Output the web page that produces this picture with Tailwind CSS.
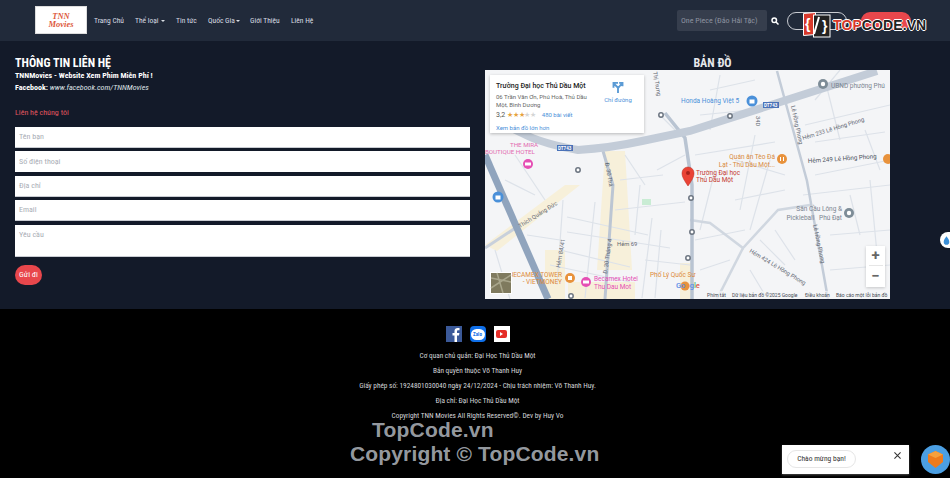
<!DOCTYPE html>
<html lang="vi">
<head>
    <meta charset="UTF-8">
    <title>Liên hệ - TNN Movies</title>
    <script src="https://cdn.jsdelivr.net/npm/@tailwindcss/browser@4"></script>
</head>
<body class="bg-[#131a29] font-['Roboto',sans-serif] [font-stretch:75%] h-[478px] w-[950px] overflow-hidden relative">

    <!-- Header -->
    <header class="h-[41px] bg-[#212a3a] flex items-center">
        <div class="ml-[35px] w-[52px] h-[28px] mt-[-2px] bg-white border border-[#ddd] flex flex-col items-center justify-center font-['Liberation_Serif',serif] font-bold italic text-[8.5px] leading-[8px] text-[#dd5a3c]">
            <span>TNN</span>
            <span>Movies</span>
        </div>
        <nav class="flex items-center ml-[7px] text-[7.5px] text-[#d9dde3] gap-[12px] whitespace-nowrap">
            <a class="w-[29px]">Trang Chủ</a>
            <a class="w-[29px] flex items-center gap-[2px]">Thể loại <i class="border-x-[2px] border-x-transparent border-t-[2px] border-t-[#d9dde3]"></i></a>
            <a class="w-[20px]">Tin tức</a>
            <a class="w-[30px] flex items-center gap-[1px]">Quốc Gia<i class="border-x-[2px] border-x-transparent border-t-[2px] border-t-[#d9dde3]"></i></a>
            <a class="w-[29px]">Giới Thiệu</a>
            <a>Liên Hệ</a>
        </nav>
        <div class="ml-auto flex items-center mr-[39px]">
            <div class="w-[90px] h-[21px] bg-[#363e4d] rounded-[2px] flex items-center pl-[4px] text-[8px] text-[#8d93a0] whitespace-nowrap">One Piece (Đảo Hải Tặc)</div>
            <svg class="ml-[4px] w-[8px] h-[8px]" viewBox="0 0 16 16" fill="none" stroke="#fff" stroke-width="3"><circle cx="6.5" cy="6.5" r="4.5"/><path d="M10 10l5 5"/></svg>
            <div class="ml-[8px] w-[60px] h-[18px] rounded-full border border-[#c9ccd2]"></div>
            <div class="ml-[14px] w-[50px] h-[18px] rounded-full bg-[#e8474c]"></div>
        </div>
    </header>

    <!-- Content -->
    <main class="h-[268px] flex">
        <section class="w-[470px] ml-[15px] shrink-0">
            <h2 class="mt-[15px] text-[12px] leading-[14px] font-bold text-white">THÔNG TIN LIÊN HỆ</h2>
            <p class="text-[8px] leading-[12px] font-bold text-white">TNNMovies - Website Xem Phim Miễn Phí !</p>
            <p class="text-[8px] leading-[12px] text-white"><b>Facebook:</b> <i class="text-[#dfe2e6]">www.facebook.com/TNNMovies</i></p>
            <p class="mt-[13px] text-[8px] leading-[12px] text-[#e0565f]">Liên hệ chúng tôi</p>
            <form class="mt-[8px] flex flex-col gap-[3.4px] text-[8px] text-[#a9adb5]">
                <div class="h-[21px] w-[455px] bg-white border-b border-[#c9ccd2] flex items-center pl-[4px]">Tên bạn</div>
                <div class="h-[21px] w-[455px] bg-white flex items-center pl-[4px]">Số điện thoại</div>
                <div class="h-[21px] w-[455px] bg-white border-b border-[#c9ccd2] flex items-center pl-[4px]">Địa chỉ</div>
                <div class="h-[21px] w-[455px] bg-white border-b border-[#c9ccd2] flex items-center pl-[4px]">Email</div>
                <div class="h-[32px] w-[455px] bg-white border-b border-[#c9ccd2] pl-[4px] pt-[5px] leading-[10px]">Yêu cầu</div>
                <div class="mt-[5px] w-[27px] h-[20px] rounded-full bg-[#e8474c] text-white flex items-center justify-center">Gửi đi</div>
            </form>
        </section>

        <section class="w-[455px]">
            <h2 class="mt-[15px] h-[14px] text-center text-[12px] leading-[14px] font-bold text-[#e6e8eb]">BẢN ĐỒ</h2>

            <!-- Map -->
            <div class="relative w-[405px] h-[229px] bg-[#f4f5f7] overflow-hidden [font-stretch:100%]">
                <svg class="absolute inset-0" width="405" height="229" viewBox="0 0 405 229" fill="none" font-family="Roboto, sans-serif">
                    <path d="M0 175 L80 115 L95 115 L12 181Z" fill="#f7f0da"/>
                    <path d="M120 81 L140 81 L147 200 L112 200Z" fill="#f7f0da"/>
                    <path d="M60 180 L80 180 L80 229 L60 229Z" fill="#f7f0da"/>
                    <path d="M83 212 L150 212 L150 229 L83 229Z" fill="#f7f0da"/>
                    <path d="M195 193 L207 193 L207 229 L195 229Z" fill="#f7f0da"/>
                    <rect x="157" y="129" width="9" height="6" fill="#c9ecd4"/>
                    <g stroke="#dde2e9" stroke-width="1.2">
                        <path d="M82 147 L163 165 M82 162 L185 178 M75 180 L145 197 M65 195 L145 212 M160 190 L205 195 M130 140 L200 132"/>
                        <path d="M110 132 L100 228 M167 148 L157 228 M78 130 L72 215 M176 160 L170 228 M155 115 L150 165"/>
                        <path d="M20 110 L50 125 M10 180 L25 229 M42 165 L75 170 M30 85 L60 130"/>
                        <path d="M210 85 L290 72 M215 45 L285 38 M225 20 L270 10 M250 90 L300 105 M250 130 L300 120 M210 170 L260 160 M215 200 L245 190"/>
                        <path d="M235 5 L225 60 M270 65 L255 140 M285 90 L265 160 M230 100 L215 160"/>
                        <path d="M320 55 L405 35 M330 72 L400 62 M330 105 L405 90 M318 125 L405 115 M345 165 L405 160 M345 200 L405 195"/>
                        <path d="M340 10 L355 70 M380 60 L395 100 M365 125 L375 165 M385 110 L395 215 M355 0 L330 30"/>
                        <path d="M275 170 L300 195 M290 160 L310 190 M265 200 L280 225"/>
                        <path d="M175 45 L195 65 M172 100 L200 85 M140 85 L160 115 M135 110 L178 105"/>
                    </g>
                    <path d="M205 150 L225 153 L258 178 L293 140 L325 135" stroke="#d0d7e0" stroke-width="2.500"/>
                    <path d="M258 178 L232 229" stroke="#d0d7e0" stroke-width="2.500"/>
                    <path d="M118 81 L128 115 L120 229" stroke="#bcc6d3" stroke-width="3"/>
                    <path d="M180 43 L200 68 L207 115 L207 229" stroke="#b9c4d2" stroke-width="3.500"/>
                    <path d="M292 1 L322 111 L343 229" stroke="#c3ccd8" stroke-width="2.500"/>
                    <path d="M0 178 L35 155" stroke="#c8d0db" stroke-width="3"/>
                    <path d="M20 55 L43 66 Q60 74 93 80 Q125 78 157 71 L205 61 L392 1" stroke="#c3ccd8" stroke-width="8"/>
                    <path d="M0 85 L63 229" stroke="#90a4bd" stroke-width="7"/>

                    <!-- Road badges -->
                    <rect x="72" y="75" width="16" height="6" fill="#4a72b8"/>
                    <text x="73" y="80" font-size="4.500" fill="#fff" font-weight="700">DT743</text>
                    <rect x="278" y="32" width="16" height="6" fill="#4a72b8"/>
                    <text x="279" y="37" font-size="4.500" fill="#fff" font-weight="700">DT743</text>

                    <!-- Road labels -->
                    <g fill="#5f6672" font-size="5.800">
                        <text transform="translate(120,93) rotate(80)">Đ. 30 Thá</text>
                        <text transform="translate(122,204) rotate(-82)">Đ. 30 Tháng 4</text>
                        <text transform="translate(35,158) rotate(-32)">Thích Quảng Đức</text>
                        <text transform="translate(75,198) rotate(-80)">Hẻm 84/41</text>
                        <text x="132" y="176">Hẻm 69</text>
                        <text transform="translate(271,46) rotate(90)">34D</text>
                        <text transform="translate(306,36) rotate(78)">Lê Hồng Phong</text>
                        <text transform="translate(318,70) rotate(-17)">Hẻm 233 Lê Hồng Phong</text>
                        <text transform="translate(323,93) rotate(-4)" font-size="6.200" fill="#4a505a">Hẻm 249 Lê Hồng Phong</text>
                        <text transform="translate(328,155) rotate(78)">Lê Hồng Phong</text>
                        <text transform="translate(264,182) rotate(31)">Hẻm 424 Lê Hồng Phong</text>
                        <text transform="translate(168,2) rotate(80)">Thị Trưng</text>
                    </g>

                    <!-- POIs -->
                    <text x="196" y="33" font-size="6.500" fill="#4a90d9">Honda Hoàng Việt 5</text>
                    <circle cx="267" cy="31" r="5.500" fill="#4a90d9"/><rect x="264.500" y="29.500" width="5" height="4" fill="#fff"/>
                    <circle cx="338" cy="14" r="5" fill="#7d8c97"/><circle cx="338" cy="14" r="2.200" fill="#fff"/>
                    <text x="346" y="18" font-size="6.500" fill="#7b8490">UBND phường Phú</text>
                    <g fill="#fff" stroke="#6b7480" stroke-width="1.500">
                        <circle cx="245" cy="46" r="2.200"/>
                        <circle cx="176" cy="45" r="2.200"/>
                        <circle cx="93" cy="100" r="2.200"/>
                        <circle cx="86" cy="226" r="2.200"/>
                        <circle cx="206" cy="128" r="2.200"/>
                        <circle cx="207" cy="162" r="2.200"/>
                        <circle cx="203" cy="188" r="2.200"/>
                    </g>
                    <circle cx="13" cy="127" r="5.500" fill="#4a90d9"/><rect x="10.500" y="125.500" width="5" height="4" fill="#fff"/>

                    <text x="25" y="77" font-size="6.200" fill="#e26bb0">THE MIRA</text>
                    <text x="0" y="84" font-size="6.200" fill="#e26bb0">BOUTIQUE HOTEL</text>
                    <circle cx="43" cy="94" r="5" fill="#e54fb4"/><rect x="40" y="92.500" width="6" height="3" fill="#fff"/>

                    <text x="290" y="89" font-size="6.500" fill="#d98a3d" text-anchor="end">Quán ăn Tèo Đá</text>
                    <text x="290" y="97" font-size="6.500" fill="#d98a3d" text-anchor="end">Lạt - Thủ Dầu Một...</text>
                    <circle cx="297" cy="89" r="5" fill="#e8923c"/><path d="M295.500 87v4M298.500 87v4" stroke="#fff"/>
                    <circle cx="403" cy="89" r="5" fill="#e8923c"/>

                    <text x="211" y="105" font-size="6.500" fill="#c5392f">Trường Đại học</text>
                    <text x="211" y="112" font-size="6.500" fill="#c5392f">Thủ Dầu Một</text>
                    <path d="M203 116 C199 110 197 107 197 103 A6 6 0 0 1 209 103 C209 107 207 110 203 116Z" fill="#ea4335" stroke="#b8281d" stroke-width="0.500"/>
                    <circle cx="203" cy="103" r="2" fill="#a8231b"/>

                    <text x="357" y="141" font-size="6.500" fill="#7b8490" text-anchor="end">Sân Cầu Lông &amp;</text>
                    <text x="357" y="150" font-size="6.500" fill="#7b8490" text-anchor="end" xml:space="preserve">Pickleball   Phú Đạt</text>
                    <circle cx="364" cy="143" r="5" fill="#7d8c97"/><circle cx="364" cy="143" r="2.200" fill="#fff"/>

                    <text x="77" y="207" font-size="6.500" fill="#dd8a3a" text-anchor="end">BECAMEX TOWER</text>
                    <text x="77" y="214" font-size="6.500" fill="#dd8a3a" text-anchor="end">- VIETMONEY</text>
                    <circle cx="85" cy="208" r="5" fill="#e8923c"/><rect x="83" y="206" width="4" height="4" fill="#fff"/>
                    <text x="109" y="211" font-size="6.500" fill="#e54fb4">Becamex Hotel</text>
                    <text x="109" y="219" font-size="6.500" fill="#e54fb4">Thu Dau Mot</text>
                    <circle cx="101" cy="212" r="5" fill="#e54fb4"/><rect x="98" y="210.500" width="6" height="3" fill="#fff"/>
                    <text x="165" y="207" font-size="6.500" fill="#dd8a3a">Phố Lý Quốc Sư</text>

                    <!-- Google -->
                    <circle cx="200" cy="216" r="4.500" fill="#e8923c"/>
                    <text x="191" y="218" font-size="7.500" fill="#5c8ee6" font-weight="500">Go<tspan fill="#e8923c">o</tspan>g<tspan fill="#5bb974">l</tspan><tspan fill="#e0564a">e</tspan></text>

                    <!-- Satellite thumb -->
                    <rect x="5" y="202" width="22" height="22" fill="#fff"/>
                    <rect x="6" y="203" width="20" height="20" fill="#7f7a5e"/>
                    <path d="M6 208 L26 212 M12 203 L18 223 M6 218 L26 205" stroke="#a9a68c" stroke-width="1.500"/>

                    <!-- Attribution -->
                    <rect x="218" y="221" width="187" height="8" fill="#f4f5f7" opacity="0.7"/>
                    <g font-size="5" fill="#444b55">
                        <text x="222" y="227">Phím tắt</text>
                        <text x="247" y="227">Dữ liệu bản đồ ©2025 Google</text>
                        <text x="320" y="227">Điều khoản</text>
                        <text x="351" y="227">Báo cáo một lỗi bản đồ</text>
                    </g>
                </svg>

                <!-- Place card -->
                <div class="absolute left-[5px] top-[5px] w-[154px] h-[58px] bg-white shadow-[0_1px_3px_rgba(0,0,0,0.25)] pl-[6px] pt-[6px]">
                    <p class="text-[7px] leading-[10px] font-medium text-[#222]">Trường Đại học Thủ Dầu Một</p>
                    <p class="mt-[2px] w-[100px] text-[6px] leading-[8px] text-[#666]">06 Trần Văn Ơn, Phú Hoà, Thủ Dầu Một, Bình Dương</p>
                    <p class="mt-[1px] flex items-center text-[7px] leading-[10px] text-[#555]">3,2 <span class="ml-[2px] text-[6.5px] text-[#e7a33e] tracking-[-0.3px]">★★★<span class="text-[#d5d5d5]">★★</span></span><span class="ml-[6px] text-[6px] text-[#4a90d9]">480 bài viết</span></p>
                    <p class="mt-[3px] text-[6px] leading-[9px] text-[#4a90d9]">Xem bản đồ lớn hơn</p>
                    <div class="absolute right-[8px] top-[6px] w-[36px] flex flex-col items-center text-[6px] leading-[9px] text-[#4a90d9]">
                        <svg class="w-[12px] h-[12px]" viewBox="0 0 16 16" fill="none" stroke="#5b9bd5" stroke-width="2.500"><path d="M8 16V9L3 4M2 9V2.500H8M8.500 9L13 3.500M9.500 2.500H14V7"/></svg>
                        <span class="mt-[2px]">Chỉ đường</span>
                    </div>
                </div>

                <!-- Zoom control -->
                <div class="absolute left-[381px] top-[176px] w-[19px] h-[41px] bg-white shadow-[0_1px_3px_rgba(0,0,0,0.2)] flex flex-col items-center text-[#666]">
                    <div class="h-[20px] flex items-center justify-center border-b border-[#e6e6e6] w-[14px] text-[15px] font-bold leading-none">+</div>
                    <div class="h-[20px] flex items-center justify-center text-[15px] font-bold leading-none">−</div>
                </div>
            </div>
        </section>
    </main>

    <!-- Footer -->
    <footer class="h-[169px] bg-black pl-[5px] flex flex-col items-center text-[7.3px] text-[#d4d6da]">
        <div class="mt-[17px] flex items-center gap-[8px]">
            <svg class="w-[16px] h-[16px]" viewBox="0 0 16 16"><rect width="16" height="16" fill="#3b5998"/><path d="M11 16V9.500H13L13.400 7H11V5.500C11 4.700 11.300 4.200 12.300 4.200H13.500V2C13 2 12.400 1.900 11.700 1.900C9.800 1.900 8.500 3 8.500 5.100V7H6.500V9.500H8.500V16Z" fill="#fff"/></svg>
            <div class="w-[16px] h-[16px] rounded-[4px] bg-[#0f6fe8] flex items-center justify-center">
                <span class="w-[14px] h-[11px] bg-white rounded-full text-[5px] leading-[11px] text-center text-[#0f6fe8] font-bold">Zalo</span>
            </div>
            <div class="w-[16px] h-[16px] bg-white flex items-center justify-center">
                <div class="w-[11px] h-[8px] rounded-[2px] bg-[#e52d27] flex items-center justify-center">
                    <i class="border-y-[2px] border-y-transparent border-l-[3px] border-l-white"></i>
                </div>
            </div>
        </div>
        <p class="mt-[6px] leading-[15px]">Cơ quan chủ quản: Đại Học Thủ Dầu Một</p>
        <p class="leading-[15px]">Bản quyền thuộc Võ Thanh Huy</p>
        <p class="leading-[15px]">Giấy phép số: 1924801030040 ngày 24/12/2024 - Chịu trách nhiệm: Võ Thanh Huy.</p>
        <p class="leading-[15px]">Địa chỉ: Đại Học Thủ Dầu Một</p>
        <p class="mt-[3px] leading-[9px]">Copyright TNN Movies All Rights Reserved©. Dev by Huy Vo</p>
    </footer>

    <!-- Side widget -->
    <div class="absolute left-[940px] top-[232px] w-[14px] h-[16px] rounded-l-full bg-white flex items-center pl-[3px]">
        <svg class="w-[7px] h-[9px]" viewBox="0 0 10 12"><path d="M5 0C3 3 1 5 1 8a4 4 0 0 0 8 0C9 5 7 3 5 0Z" fill="#3a8fd8"/></svg>
    </div>

    <!-- Chat toast -->
    <div class="absolute left-[782px] top-[445px] w-[127px] h-[29px] bg-white shadow-[0_1px_2px_rgba(255,255,255,0.3)]">
        <div class="absolute left-[5px] top-[5px] w-[69px] h-[18px] rounded-full border border-[#e6e6e6] flex items-center justify-center text-[7.5px] text-[#333]">Chào mừng bạn!</div>
        <svg class="absolute left-[112px] top-[7px] w-[7px] h-[7px]" viewBox="0 0 8 8" stroke="#333" stroke-width="1.200"><path d="M0.500 0.500L7.500 7.500M7.500 0.500L0.500 7.500"/></svg>
    </div>
    <div class="absolute left-[921px] top-[445px] w-[29px] h-[29px] rounded-full bg-[#4b9fe3] flex items-center justify-center">
        <svg class="w-[17px] h-[19px]" viewBox="0 0 17 19"><path d="M8.500 1L16 4.500V12L8.500 18L1 12V4.500Z" fill="#ee7b1c"/><path d="M8.500 1L16 4.500L8.500 8L1 4.500Z" fill="#f6a03c"/></svg>
    </div>

    <!-- Watermark text -->
    <div class="absolute left-[372px] top-[420px] text-[21px] leading-[19px] font-['Liberation_Sans',sans-serif] [font-stretch:100%] font-bold text-[#a9aeb5]/90 tracking-[0.2px]">TopCode.vn</div>
    <div class="absolute left-[350px] top-[444px] text-[21px] leading-[19px] font-['Liberation_Sans',sans-serif] [font-stretch:100%] font-bold text-[#a9aeb5]/90 tracking-[0.15px]">Copyright © TopCode.vn</div>

    <!-- Watermark logo -->
    <div class="absolute left-[803px] top-[10px] flex items-center">
        <svg class="w-[28px] h-[29px]" viewBox="0 0 28 29">
            <path d="M0.500 3.500L12.500 2.500V24.500L0.500 25.500Z" fill="#d8392b" stroke="#fff"/>
            <rect x="10.500" y="5" width="16.500" height="22" fill="#222" stroke="#fff"/>
            <text x="2" y="19" font-size="14" font-weight="700" fill="#fff" font-family="Liberation Sans, sans-serif">{</text>
            <text x="19" y="21" font-size="14" font-weight="700" fill="#fff" font-family="Liberation Sans, sans-serif">}</text>
            <path d="M16 7L11 24" stroke="#fff" stroke-width="2"/>
        </svg>
        <div class="ml-[2px] text-[14px] leading-[16px] font-black font-['Liberation_Sans',sans-serif] [font-stretch:100%] text-[#d8392b] [text-shadow:1px_0_0_#fff,-1px_0_0_#fff,0_1px_0_#fff,0_-1px_0_#fff] tracking-[0.1px]">TOP<span class="text-[#222]">CODE.VN</span></div>
    </div>
</body>
</html>
